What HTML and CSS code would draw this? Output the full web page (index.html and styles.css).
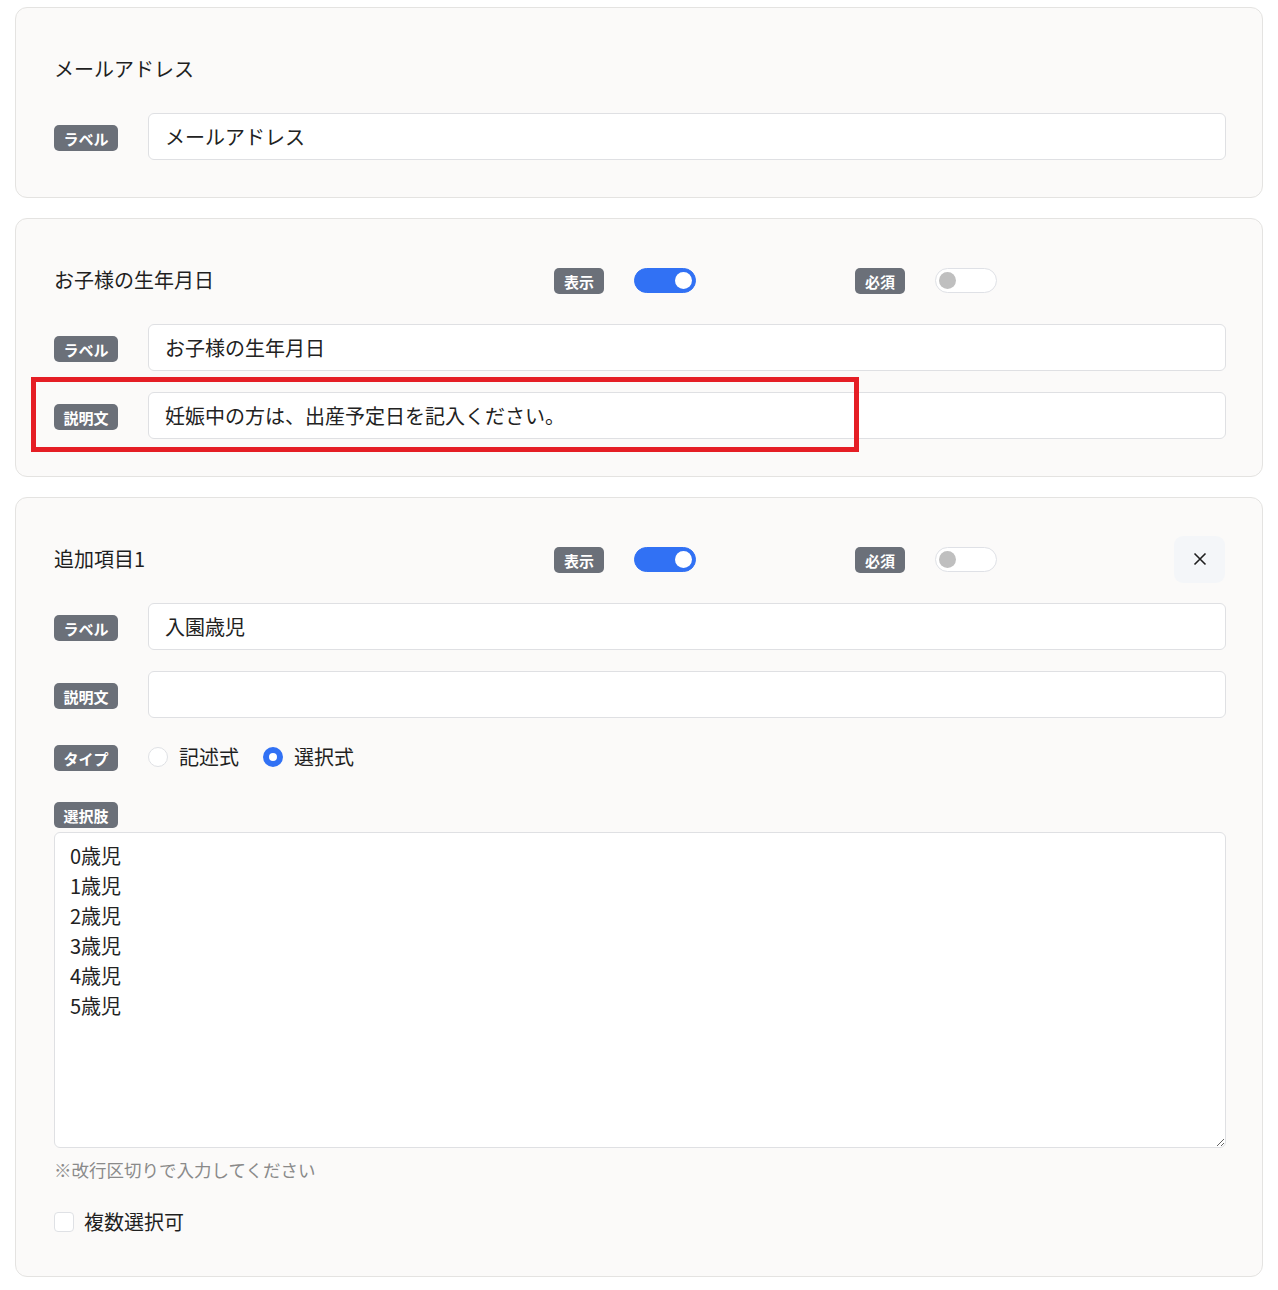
FILE: index.html
```html
<!DOCTYPE html>
<html lang="ja">
<head>
<meta charset="utf-8">
<link rel="stylesheet" href="styles.css">
</head>
<body>
<div class="page">
  <section class="card">
    <div class="head"><div class="title">メールアドレス</div></div>
    <div class="field">
      <span class="badge">ラベル</span>
      <div class="input">メールアドレス</div>
    </div>
  </section>

  <section class="card annotated">
    <div class="head">
      <div class="title">お子様の生年月日</div>
      <div class="group"><span class="badge">表示</span><span class="toggle on"><span class="knob"></span></span></div>
      <div class="group"><span class="badge">必須</span><span class="toggle"><span class="knob"></span></span></div>
    </div>
    <div class="field">
      <span class="badge">ラベル</span>
      <div class="input">お子様の生年月日</div>
    </div>
    <div class="field">
      <span class="badge">説明文</span>
      <div class="input">妊娠中の方は、出産予定日を記入ください。</div>
    </div>
    <div class="highlight"></div>
  </section>

  <section class="card">
    <div class="head">
      <div class="title">追加項目1</div>
      <div class="group"><span class="badge">表示</span><span class="toggle on"><span class="knob"></span></span></div>
      <div class="group"><span class="badge">必須</span><span class="toggle"><span class="knob"></span></span></div>
      <div class="spacer"></div>
      <button class="close" type="button"><svg width="16" height="16" viewBox="0 0 16 16"><path d="M2.5 2.5 L13.5 13.5 M13.5 2.5 L2.5 13.5" stroke="#1f1f1f" stroke-width="1.6" fill="none"/></svg></button>
    </div>
    <div class="field">
      <span class="badge">ラベル</span>
      <div class="input">入園歳児</div>
    </div>
    <div class="field">
      <span class="badge">説明文</span>
      <div class="input"></div>
    </div>
    <div class="field type-row">
      <span class="badge">タイプ</span>
      <div class="radios">
        <label class="radio"><span class="dot"></span>記述式</label>
        <label class="radio"><span class="dot checked"></span>選択式</label>
      </div>
    </div>
    <div class="choices">
      <span class="badge">選択肢</span>
      <textarea class="area">0歳児
1歳児
2歳児
3歳児
4歳児
5歳児</textarea>
      <div class="hint">※改行区切りで入力してください</div>
      <label class="check"><span class="box"></span>複数選択可</label>
    </div>
  </section>
</div>
</body>
</html>
```
FILE: styles.css
```css
* { box-sizing: border-box; }
html, body { margin: 0; padding: 0; background: #ffffff; }
body {
  font-family: "Noto Sans CJK JP", "Noto Sans", sans-serif;
  color: #1f1f1f;
}
.page {
  padding: 7px 15px 10px;
  display: flex;
  flex-direction: column;
  gap: 20px;
}
.card {
  position: relative;
  background: #fbfaf9;
  border: 1px solid #e4e3e1;
  border-radius: 12px;
  padding: 37px 36px 36px 38px;
  display: flex;
  flex-direction: column;
  gap: 20px;
}
.head {
  height: 48px;
  display: flex;
  align-items: center;
}
.title {
  width: 500px;
  font-size: 20px;
  line-height: 28px;
}
.group {
  width: 301px;
  display: flex;
  align-items: center;
  gap: 30px;
}
.spacer { flex: 1; }
.badge {
  display: inline-flex;
  align-items: center;
  justify-content: center;
  height: 26px;
  margin-top: 2px;
  padding: 0 10px;
  border-radius: 5px;
  background: #6b7079;
  color: #ffffff;
  font-size: 15px;
  font-weight: 700;
  line-height: 1;
  flex: none;
}
.toggle {
  position: relative;
  width: 62px;
  height: 25px;
  border-radius: 13px;
  background: #ffffff;
  border: 1px solid #dfe1e6;
  flex: none;
}
.toggle .knob {
  position: absolute;
  top: 3px;
  left: 3px;
  width: 17px;
  height: 17px;
  border-radius: 50%;
  background: #bfbfbf;
}
.toggle.on {
  background: #3171f4;
  border-color: #3171f4;
}
.toggle.on .knob {
  left: auto;
  right: 3px;
  background: #ffffff;
}
.close {
  width: 51px;
  height: 47px;
  border: none;
  border-radius: 9px;
  background: #f4f6f9;
  display: flex;
  align-items: center;
  justify-content: center;
  padding: 0;
  margin-right: 1px;
}
.field {
  height: 48px;
  display: flex;
  align-items: center;
  gap: 30px;
}
.field .badge { width: 64px; padding: 0; }
.input {
  flex: 1;
  align-self: flex-start;
  height: 47px;
  background: #ffffff;
  border: 1px solid #dfe0e3;
  border-radius: 6px;
  padding: 0 16px;
  font-size: 20px;
  line-height: 45px;
  color: #222;
}
.field.type-row { height: 36px; }
.radios {
  display: flex;
  align-items: center;
  gap: 24px;
}
.radio {
  display: flex;
  align-items: center;
  gap: 11px;
  font-size: 20px;
  line-height: 28px;
}
.dot {
  width: 20px;
  height: 20px;
  border-radius: 50%;
  background: #ffffff;
  border: 1px solid #dfe1e5;
}
.dot.checked {
  border: 6px solid #3171f4;
}
.choices {
  margin-top: 7px;
  display: flex;
  flex-direction: column;
  align-items: flex-start;
}
.choices .badge { margin-top: 0; width: 64px; padding: 0; }
.area {
  display: block;
  margin: 4px 0 0;
  width: 100%;
  height: 316px;
  background: #ffffff;
  border: 1px solid #dfe0e3;
  border-radius: 6px;
  padding: 8px 15px;
  font-family: "Noto Sans CJK JP", "Noto Sans", sans-serif;
  font-size: 20px;
  line-height: 30px;
  color: #222;
  resize: vertical;
}
.hint {
  margin-top: 10px;
  font-size: 17.5px;
  line-height: 24px;
  color: #8a8a8a;
}
.check {
  margin-top: 25px;
  margin-bottom: 3px;
  display: flex;
  align-items: center;
  gap: 10px;
  font-size: 20px;
  line-height: 30px;
}
.box {
  width: 20px;
  height: 20px;
  border-radius: 4px;
  background: #ffffff;
  border: 1px solid #dfe1e5;
}
.highlight {
  position: absolute;
  left: 15px;
  top: 158px;
  width: 828px;
  height: 75px;
  border: 5px solid #e51e25;
  pointer-events: none;
}
```
